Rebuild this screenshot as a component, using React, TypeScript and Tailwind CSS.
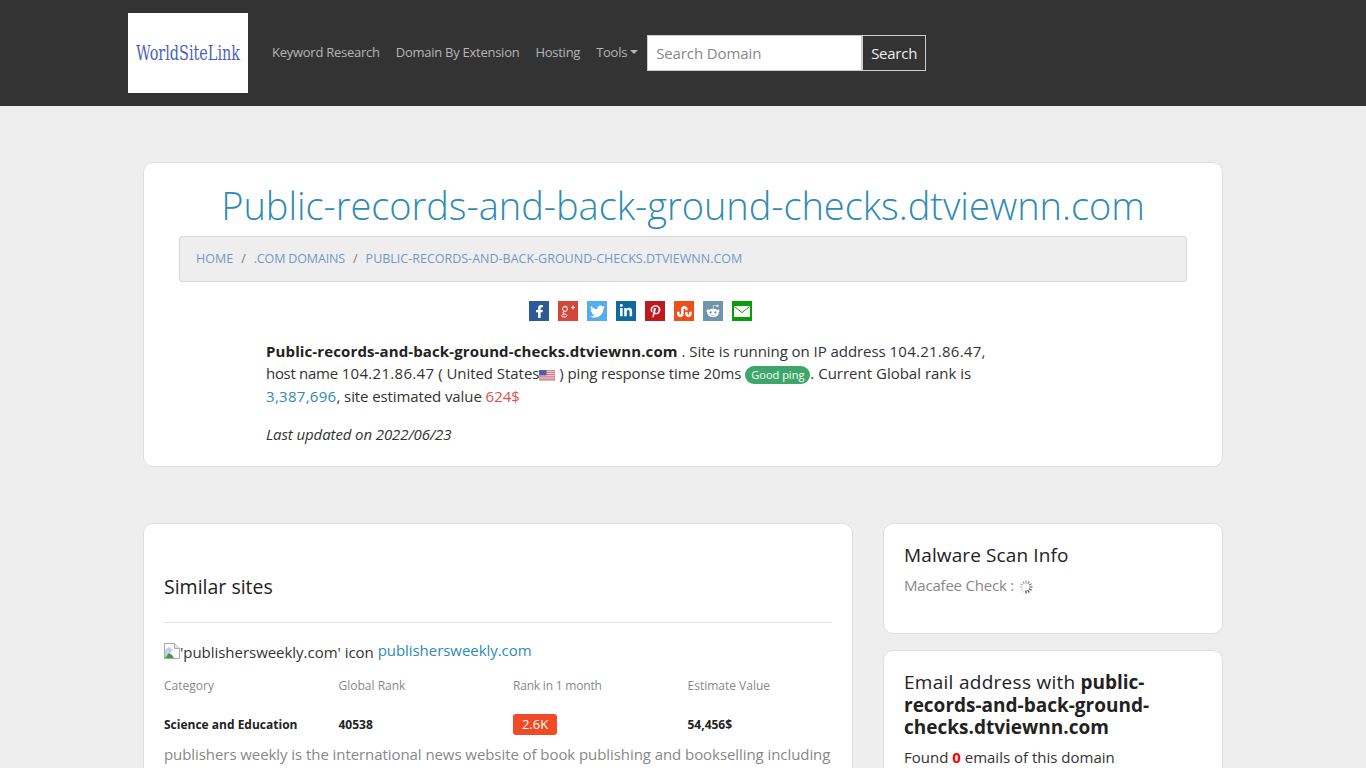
import { FaFacebookF, FaTwitter, FaLinkedinIn, FaPinterestP, FaStumbleupon, FaRedditAlien } from 'react-icons/fa';

function FlagUS() {
  return (
    <svg width="16" height="11" viewBox="0 0 16 11" className="inline-block align-[-2px]">
      <rect width="16" height="11" fill="#f4f4f8" />
      <path d="M0 .8h16M0 2.6h16M0 4.4h16M0 6.2h16M0 8h16M0 9.8h16" stroke="#d2505a" strokeWidth="0.9" />
      <rect width="7.5" height="5.4" fill="#4a5fa8" />
      <rect x="0" y="0" width="16" height="11" fill="none" stroke="#8a8aa0" strokeWidth="0.5" />
    </svg>
  );
}

function BrokenImage() {
  return (
    <svg width="16" height="16" viewBox="0 0 16 16" className="inline-block align-[-1px]">
      <path d="M.5.5h10l5 5v10H.5z" fill="#fff" stroke="#a8a8a8" />
      <path d="M10.5.5v5h5" fill="#e4e4e4" stroke="#a8a8a8" />
      <path d="M1 7l4-3 4 3-8 8z" fill="#bcd0f0" />
      <path d="M1 15l4-5 3 2 2 3z" fill="#4f9a3c" />
    </svg>
  );
}

function Spinner() {
  const rays = [0, 30, 60, 90, 120, 150, 180, 210, 240, 270, 300, 330];
  return (
    <svg width="16" height="16" viewBox="0 0 16 16" className="inline-block align-[-4px]">
      {rays.map((r, i) => (
        <line key={r} x1="8" y1="1.5" x2="8" y2="4.5" stroke="#333" strokeOpacity={0.12 + ((i + 5) % 12) * 0.078} strokeWidth="1.2" transform={`rotate(${r} 8 8)`} />
      ))}
    </svg>
  );
}

function GooglePlus() {
  return (
    <svg width="16" height="14" viewBox="0 0 16 14" fill="none" stroke="#fff" strokeWidth="1">
      <circle cx="5" cy="5" r="2.4" />
      <path d="M7.2 2.4H3.8M4 7.5c-1.6 1-1.4 1.8 0 2.3 2 .6 3.4 1.2 2.6 2.4-.8 1.1-4 1.1-4.8 0-.5-.9.5-1.9 2.4-2.2" />
      <path d="M11 3.5h4M13 1.5v4" />
    </svg>
  );
}

function MailIcon() {
  return (
    <svg width="16" height="11" viewBox="0 0 16 11">
      <rect width="16" height="11" fill="#fff" />
      <path d="M.5.6L8 6.6l7.5-6" fill="none" stroke="#0a9d0a" strokeWidth="1" />
    </svg>
  );
}

const navLinks = ['Keyword Research', 'Domain By Extension', 'Hosting'];

export default function App() {
  return (
    <div className="h-[768px] overflow-hidden bg-[#eeeeee] font-['Open_Sans',sans-serif] text-[15px] leading-[22.5px] text-[#333]">
      {/* Navbar */}
      <nav className="h-[106px] bg-[#333333] pl-[128px] pt-[13px]">
        <div className="flex items-center">
          <div className="flex h-20 w-[120px] items-center justify-center overflow-hidden bg-white">
            <span className="scale-x-[0.8] whitespace-nowrap font-['DejaVu_Serif_Condensed','DejaVu_Serif',serif] text-[20px] leading-none text-[#4a5fc0]">WorldSiteLink</span>
          </div>
          <div className="ml-4 flex items-center pb-[2px] text-[13px] tracking-[-0.26px] text-[#b5b5b5]">
            {navLinks.map((l) => (
              <a key={l} className="px-2">{l}</a>
            ))}
            <a className="flex items-center px-2">
              Tools
              <span className="ml-[3px] h-0 w-0 border-x-[4px] border-t-[4px] border-x-transparent border-t-[#b5b5b5]"></span>
            </a>
          </div>
          <div className="ml-px flex items-center">
            <input placeholder="Search Domain" className="h-9 w-[215px] border border-[#cccccc] bg-white px-2 text-[15px] tracking-[-0.1px] text-[#333] placeholder:text-[#888]" />
            <button className="h-9 w-16 border border-[#cccccc] bg-[#333] text-[15px] tracking-[-0.25px] text-[#eeeeee]">Search</button>
          </div>
        </div>
      </nav>

      <main className="mx-[143px] w-[1080px]">
        {/* Site summary */}
        <section className="mt-14 h-[305px] rounded-[10px] border border-[#dfdfdf] bg-white px-[35px] pt-[17px]">
          <h1 className="text-center text-[38px] font-light leading-[50px] tracking-[-0.04px] text-[#2e8bb4]">Public-records-and-back-ground-checks.dtviewnn.com</h1>
          <div className="mt-[6px] flex h-[46px] items-center gap-2 rounded-[3px] border border-[#d8d8d8] bg-[#eeeeee] px-4 text-[12.5px] uppercase text-[#7398c6]">
            <a>Home</a>
            <span className="text-[#777]">/</span>
            <a className="tracking-[-0.15px]">.com domains</a>
            <span className="text-[#777]">/</span>
            <a>Public-records-and-back-ground-checks.dtviewnn.com</a>
          </div>
          <div className="mt-[19px] flex justify-center gap-[9px] pr-[85px] text-white">
            <span className="flex h-5 w-5 items-center justify-center bg-[#2d5a97] text-[13px]"><FaFacebookF /></span>
            <span className="flex h-5 w-5 items-center justify-center bg-[#d2473a]"><GooglePlus /></span>
            <span className="flex h-5 w-5 items-center justify-center bg-[#55acee] text-[15px]"><FaTwitter /></span>
            <span className="flex h-5 w-5 items-center justify-center bg-[#0e6b9e] text-[14px]"><FaLinkedinIn /></span>
            <span className="flex h-5 w-5 items-center justify-center bg-[#bd1a20] text-[13px]"><FaPinterestP /></span>
            <span className="flex h-5 w-5 items-center justify-center bg-[#eb4f1c] text-[15px]"><FaStumbleupon /></span>
            <span className="flex h-5 w-5 items-center justify-center bg-[#7194aa] text-[14px]"><FaRedditAlien /></span>
            <span className="flex h-5 w-5 items-center justify-center bg-[#0a9d0a]"><MailIcon /></span>
          </div>
          <div className="ml-[87px] mt-[18.75px] w-[740px]">
            <p>
              <strong className="font-bold tracking-[0.12px] text-[#222]">Public-records-and-back-ground-checks.dtviewnn.com</strong> <span className="tracking-[-0.06px]">. Site is running on IP address</span> <span className="tracking-[0.25px]">104.21.86.47</span>, <span className="tracking-[-0.3px]">host name</span> <span className="tracking-[0.3px]">104.21.86.47</span> <span className="tracking-[-0.05px]">( United States</span><FlagUS /> <span className="tracking-[-0.1px]">) ping response time 20ms</span> <span className="inline-block h-[18px] rounded-[9px] bg-[#3da76a] px-[6px] align-baseline text-[11px] leading-[18px] text-white">Good ping</span>. Current Global rank is <a className="tracking-[0.3px] text-[#2e8bb4]">3,387,696</a><span className="tracking-[-0.1px]">, site estimated value</span> <span className="text-[#e0504a]">624$</span>
            </p>
            <p className="mt-4 italic tracking-[-0.1px]">Last updated on 2022/06/23</p>
          </div>
        </section>

        <div className="mt-14 flex items-start gap-[30px]">
          {/* Similar sites */}
          <section className="w-[710px] rounded-[10px] border border-[#dfdfdf] bg-white px-5 pb-10 pt-[51px]">
            <h2 className="text-[19.5px] leading-6 text-[#222]">Similar sites</h2>
            <hr className="mt-[23px] border-[#e5e5e5]" />
            <div className="mt-[18px]">
              <span className="tracking-[-0.03px]"><BrokenImage />'publishersweekly.com' icon</span>{' '}
              <a className="relative top-[-2px] tracking-[-0.05px] text-[#2e8bb4]">publishersweekly.com</a>
            </div>
            <div className="mt-[13px] grid grid-cols-[174.5px_174.5px_174.5px_1fr] text-xs leading-[18px] text-[#888]">
              <span>Category</span>
              <span>Global Rank</span>
              <span className="tracking-[-0.2px]">Rank in 1 month</span>
              <span>Estimate Value</span>
            </div>
            <div className="mt-[19px] grid grid-cols-[174.5px_174.5px_174.5px_1fr] items-center text-xs font-bold text-[#222]">
              <span>Science and Education</span>
              <span>40538</span>
              <span className="h-[22px]"><span className="block h-[21px] w-11 rounded-[3px] bg-[#f04a26] text-center text-[13px] font-normal leading-[21px] text-white">2.6K</span></span>
              <span>54,456$</span>
            </div>
            <p className="mt-[7px] whitespace-nowrap tracking-[-0.07px] text-[#888]">publishers weekly is the international news website of book publishing and bookselling including</p>
          </section>

          {/* Sidebar */}
          <aside className="w-[340px]">
            <section className="h-[111px] rounded-[10px] border border-[#dfdfdf] bg-white px-5 pt-[19px]">
              <h3 className="text-[19px] leading-6 tracking-[0.12px] text-[#222]">Malware Scan Info</h3>
              <p className="mt-[7px] tracking-[-0.2px] text-[#888]">Macafee Check : <Spinner /></p>
            </section>
            <section className="mt-4 rounded-[10px] border border-[#dfdfdf] bg-white px-5 pb-10 pt-5">
              <h3 className="text-[19px] leading-[22.5px] text-[#222]"><span className="tracking-[0.28px]">Email address with</span> <strong className="font-bold">public-records-and-back-ground-checks.dtviewnn.com</strong></h3>
              <p className="mt-[7px]">Found <strong className="font-bold text-[#f00]">0</strong> emails of this domain</p>
            </section>
          </aside>
        </div>
      </main>
    </div>
  );
}
